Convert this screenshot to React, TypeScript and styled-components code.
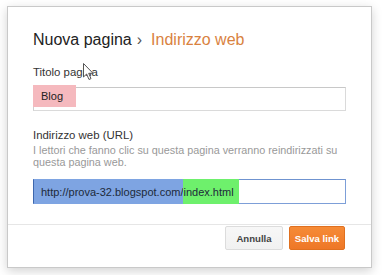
import React from "react";
import styled, { createGlobalStyle } from "styled-components";

const GlobalStyle = createGlobalStyle`
    html, body {
        margin: 0;
        padding: 0;
        background: #fff;
    }
    body {
        font-family: "Liberation Sans", Arial, sans-serif;
        -webkit-font-smoothing: antialiased;
    }
`

const Page = styled.div`
    position: relative;
    width: 382px;
    height: 275px;
    overflow: hidden;
    padding: 6px 0 0 7px;
    box-sizing: border-box;
    background: #fff;

    /** faint rule of the page behind the dialog */
    ::before {
        content: '';
        position: absolute;
        left: 0;
        right: 0;
        top: 217px;
        height: 1px;
        background: #e6e6e6;
    }
`

const Dialog = styled.section`
    position: relative;
    z-index: 1;
    width: 365px;
    height: 262px;
    box-sizing: border-box;
    padding: 23px 25px 0 25px;
    display: flex;
    flex-direction: column;
    background: #fff;
    border: 1px solid #c9c9c9;
    box-shadow: 0 3px 10px rgba(0, 0, 0, 0.18);
`

const Title = styled.h2`
    margin: 0;
    font-size: 16px;
    line-height: 20px;
    font-weight: normal;
    color: #222;
    white-space: nowrap;
`

const Crumb = styled.span`
    margin: 0 9px 0 5px;
    color: #555;
`

const Current = styled.span`
    color: #d9823f;
`

type TLabelProps = {
    /** space above the label */
    $top: number
}

const Label = styled.label<TLabelProps>`
    display: block;
    margin-top: ${({ $top }) => $top}px;
    font-size: 11.4px;
    line-height: 14px;
    color: #333;
    white-space: nowrap;
`

const Help = styled.p`
    margin: 2px 0 0;
    font-size: 10.8px;
    line-height: 12px;
    color: #999;
`

type TFieldProps = {
    $focused?: boolean
    $top: number
}

const Field = styled.div<TFieldProps>`
    display: flex;
    align-items: stretch;
    height: ${({ $focused }) => ($focused ? 25 : 24)}px;
    margin-top: ${({ $top }) => $top}px;
    box-sizing: border-box;
    border: 1px solid ${({ $focused }) => ($focused ? "#7d9fd8" : "#dadada")};
    border-top-color: ${({ $focused }) => ($focused ? "#6f93d0" : "#c8c8c8")};
    border-left-color: ${({ $focused }) => ($focused ? "#3e67ad" : "#d0d0d0")};
    font-size: 11px;
    color: #222;
    white-space: nowrap;
`

const TitleMark = styled.span`
    display: flex;
    align-items: center;
    margin: -3px 0 3px -1px;
    padding: 0 13px 0 8px;
    background: #f5b9be;
    color: #222;
`

type TSelectionProps = {
    $tone: "blue" | "green"
}

const Selection = styled.span<TSelectionProps>`
    display: flex;
    align-items: center;
    margin: -1px 0;
    padding: ${({ $tone }) => ($tone === "blue" ? "0 0 0 7px" : "0 5px 0 0")};
    background: ${({ $tone }) => ($tone === "blue" ? "#7ea4e2" : "#6ef06c")};
    color: #1d2a3a;
`

const Actions = styled.div`
    display: flex;
    justify-content: flex-end;
    gap: 6px;
    margin-top: 22px;
    padding-right: 1px;
`

type TButtonProps = {
    $primary?: boolean
}

const Button = styled.button<TButtonProps>`
    height: 24px;
    padding: 0;
    width: ${({ $primary }) => ($primary ? 56 : 58)}px;
    font-family: inherit;
    font-size: 9.6px;
    font-weight: bold;
    border-radius: 2px;
    cursor: pointer;
    border: 1px solid ${({ $primary }) => ($primary ? "#e0701f" : "#dcdcdc")};
    color: ${({ $primary }) => ($primary ? "#fff" : "#444")};
    background: ${({ $primary }) =>
        $primary
            ? "linear-gradient(#f68b36, #ee7727)"
            : "linear-gradient(#f7f7f7, #f1f1f1)"};
`

const Pointer = styled.svg`
    position: absolute;
    left: 75px;
    top: 56px;
    z-index: 2;
`

export default function App() {
    return (
        <>
            <GlobalStyle />
            <Page>
                <Dialog>
                    <Title>
                        Nuova pagina<Crumb>›</Crumb><Current>Indirizzo web</Current>
                    </Title>

                    <Label $top={15}>Titolo pagina</Label>
                    <Field $top={8}>
                        <TitleMark>Blog</TitleMark>
                    </Field>

                    <Label $top={17}>Indirizzo web (URL)</Label>
                    <Help>
                        I lettori che fanno clic su questa pagina verranno reindirizzati su
                        questa pagina web.
                    </Help>
                    <Field $focused $top={11}>
                        <Selection $tone="blue">http://prova-32.blogspot.com/</Selection>
                        <Selection $tone="green">index.html</Selection>
                    </Field>

                    <Actions>
                        <Button>Annulla</Button>
                        <Button $primary>Salva link</Button>
                    </Actions>

                    <Pointer width="12" height="18" viewBox="0 0 12 18">
                        <path
                            d="M0.5 0.5 L0.5 14 L3.6 11 L6 16.5 L8 15.6 L5.7 10.3 L10 10.3 Z"
                            fill="#fff"
                            stroke="#555"
                            strokeWidth="1"
                            strokeLinejoin="round"
                        />
                    </Pointer>
                </Dialog>
            </Page>
        </>
    );
}
